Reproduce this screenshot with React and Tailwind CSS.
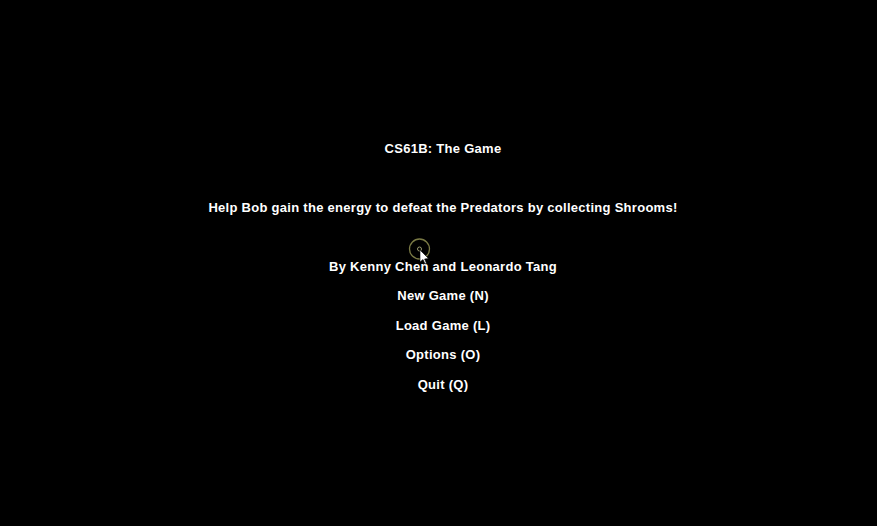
export default function App() {
  const font = { fontFamily: '"Liberation Sans", Arial, sans-serif' };
  return (
    <div className="relative w-[877px] h-[526px] bg-black overflow-hidden" style={font}>
      <div className="flex flex-col items-center pt-[141px] pl-[9px] text-white font-bold text-[13px] leading-[16px] tracking-[0.28px]">
        <div>CS61B: The Game</div>
        <div className="mt-[43px]">Help Bob gain the energy to defeat the Predators by collecting Shrooms!</div>
        <div className="mt-[43px]">By Kenny Chen and Leonardo Tang</div>
        <div className="mt-[13px]">New Game (N)</div>
        <div className="mt-[14px]">Load Game (L)</div>
        <div className="mt-[13px]">Options (O)</div>
        <div className="mt-[14px]">Quit (Q)</div>
      </div>
      <svg className="absolute left-[405px] top-[235px]" width="35" height="35" viewBox="0 0 35 35">
        <circle cx="14.5" cy="14" r="10" fill="none" stroke="#7a7a45" strokeWidth="1.3" />
        <circle cx="14.5" cy="14" r="2" fill="none" stroke="#9a9a70" strokeWidth="1" />
        <path d="M15 15 L15 27 L18 24.5 L20 29 L21.5 28.3 L19.6 24 L23.5 23.5 Z" fill="#ffffff" stroke="#000" strokeWidth="0.6" />
      </svg>
    </div>
  );
}
